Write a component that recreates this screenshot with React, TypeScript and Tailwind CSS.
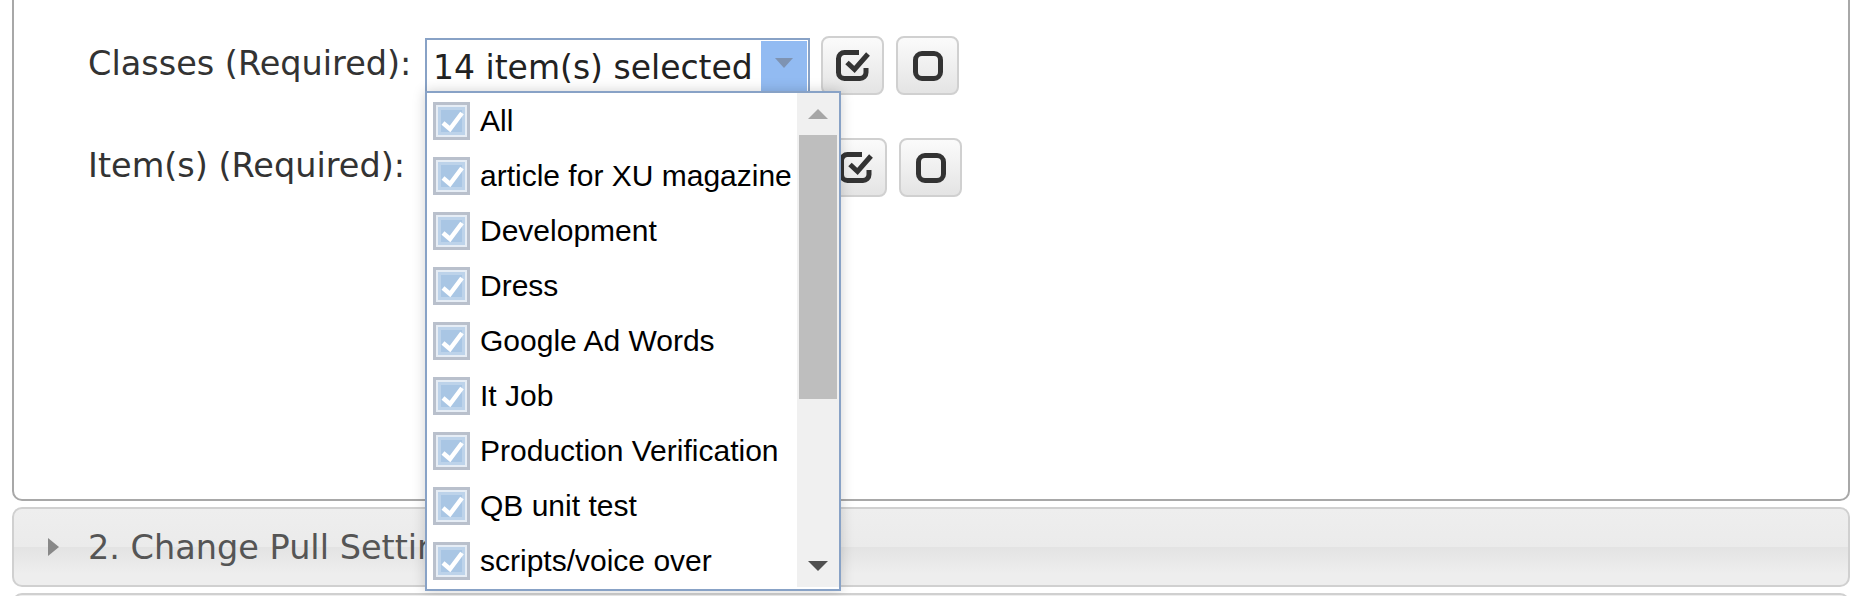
import React from "react";

const items = ["All", "article for XU magazine", "Development", "Dress", "Google Ad Words", "It Job", "Production Verification", "QB unit test", "scripts/voice over"];

function CheckedIcon() {
  return (
    <svg width="34" height="33" viewBox="0 0 34 33" fill="none" stroke="#333" strokeWidth="5">
      <path d="M23 3.5H8.5a6 6 0 0 0-6 6v14a6 6 0 0 0 6 6H24a6 6 0 0 0 6-6V19" />
      <path d="M11 13.5l7.5 7L32 5" strokeWidth="5" />
    </svg>
  );
}

function EmptyIcon() {
  return (
    <svg width="32" height="32" viewBox="0 0 32 32" fill="none" stroke="#333" strokeWidth="5">
      <rect x="3.5" y="3.5" width="25" height="25" rx="6.5" />
    </svg>
  );
}

function IconButton({ children }: { children: React.ReactNode }) {
  return (
    <button className="flex h-[59px] w-[63px] shrink-0 items-center justify-center rounded-[8px] border-2 border-[#d0d0d0] bg-gradient-to-b from-[#fbfbfb] to-[#e4e4e4]">
      {children}
    </button>
  );
}

function Select({ text }: { text: string }) {
  return (
    <div className="flex h-[56px] w-[385px] shrink-0 border-2 border-[#88a2c6] bg-white p-[1px]">
      <div className="flex-1 truncate pl-[5px] pt-[7px] text-[33px] leading-[40px] text-[#222]">{text}</div>
      <div className="flex w-[46px] justify-center bg-[#92bbf2] pt-[17px]">
        <div className="h-0 w-0 border-x-[9px] border-t-[10px] border-x-transparent border-t-[#7e93b2]" />
      </div>
    </div>
  );
}

function CheckBox() {
  return (
    <svg width="37" height="38" viewBox="0 0 37 38" className="shrink-0">
      <rect width="37" height="38" fill="#b9c0cc" />
      <rect x="3" y="3" width="31" height="32" fill="#e6edf5" />
      <rect x="5" y="5" width="27" height="28" fill="#bdd3ea" />
      <rect x="8" y="8" width="21" height="22" fill="#a9c6e4" />
      <path d="M10 21l7 6L29 11" fill="none" stroke="#fff" strokeWidth="4.5" />
    </svg>
  );
}

export default function App() {
  return (
    <div className="relative h-[596px] w-[1863px] overflow-hidden bg-white font-['DejaVu_Sans',sans-serif]">
      <div className="ml-[12px] mr-[13px] -mt-[4px] h-[505px] rounded-b-[10px] border-2 border-[#a8a8a8] bg-white pl-[74px] pt-[38px]">
        <div className="flex flex-col gap-[43px]">
          <div className="flex items-center">
            <div className="w-[337px] shrink-0 whitespace-nowrap pb-[3px] text-[33.5px] leading-[40px] text-[#333]">Classes (Required):</div>
            <Select text="14 item(s) selected" />
            <div className="ml-[11px] flex gap-[12px]">
              <IconButton><CheckedIcon /></IconButton>
              <IconButton><EmptyIcon /></IconButton>
            </div>
          </div>
          <div className="flex items-center">
            <div className="w-[339px] shrink-0 whitespace-nowrap pb-[3px] text-[33.5px] leading-[40px] text-[#333]">Item(s) (Required):</div>
            <Select text="" />
            <div className="ml-[12px] flex gap-[12px]">
              <IconButton><CheckedIcon /></IconButton>
              <IconButton><EmptyIcon /></IconButton>
            </div>
          </div>
        </div>
      </div>

      <div className="ml-[12px] mr-[13px] mt-[6px] flex h-[80px] items-center rounded-[10px] border-2 border-[#d0d0d0] bg-[linear-gradient(to_bottom,#eeeeee_0%,#ebebeb_50%,#e3e3e3_50%,#eeeeee_85%,#eeeeee_100%)] pl-[34px]">
        <div className="mr-[29px] h-0 w-0 border-y-[9px] border-l-[11px] border-y-transparent border-l-[#888]" />
        <div className="mt-[1px] whitespace-nowrap text-[33.5px] leading-[40px] text-[#555]">2. Change Pull Settings</div>
      </div>

      <div className="ml-[12px] mr-[13px] mt-[6px] h-[40px] rounded-t-[10px] border-2 border-[#d0d0d0] bg-[#eeeeee]" />

      <div className="absolute left-[425px] top-[91px] h-[500px] w-[416px] border-2 border-[#88a2c6] bg-white shadow-[0_0_12px_rgba(0,0,0,0.18)]">
        <div className="flex h-full">
          <div className="flex-1 overflow-hidden pl-[6px] pt-[9px] font-['Liberation_Sans',sans-serif] text-[30px] text-black">
            {items.map((item) => (
              <div key={item} className="flex h-[55px] items-start gap-[10px] whitespace-nowrap">
                <CheckBox />
                <span className="leading-[38px]">{item}</span>
              </div>
            ))}
          </div>
          <div className="flex h-[494px] w-[42px] shrink-0 flex-col items-center bg-[#f0f0f0] px-[2px]">
            <div className="mt-[16px] h-0 w-0 border-x-[10px] border-b-[10px] border-x-transparent border-b-[#a6a6a6]" />
            <div className="mt-[16px] h-[264px] w-full bg-[#bebebe]" />
            <div className="mt-[162px] h-0 w-0 border-x-[10px] border-t-[10px] border-x-transparent border-t-[#505050]" />
          </div>
        </div>
      </div>
    </div>
  );
}
